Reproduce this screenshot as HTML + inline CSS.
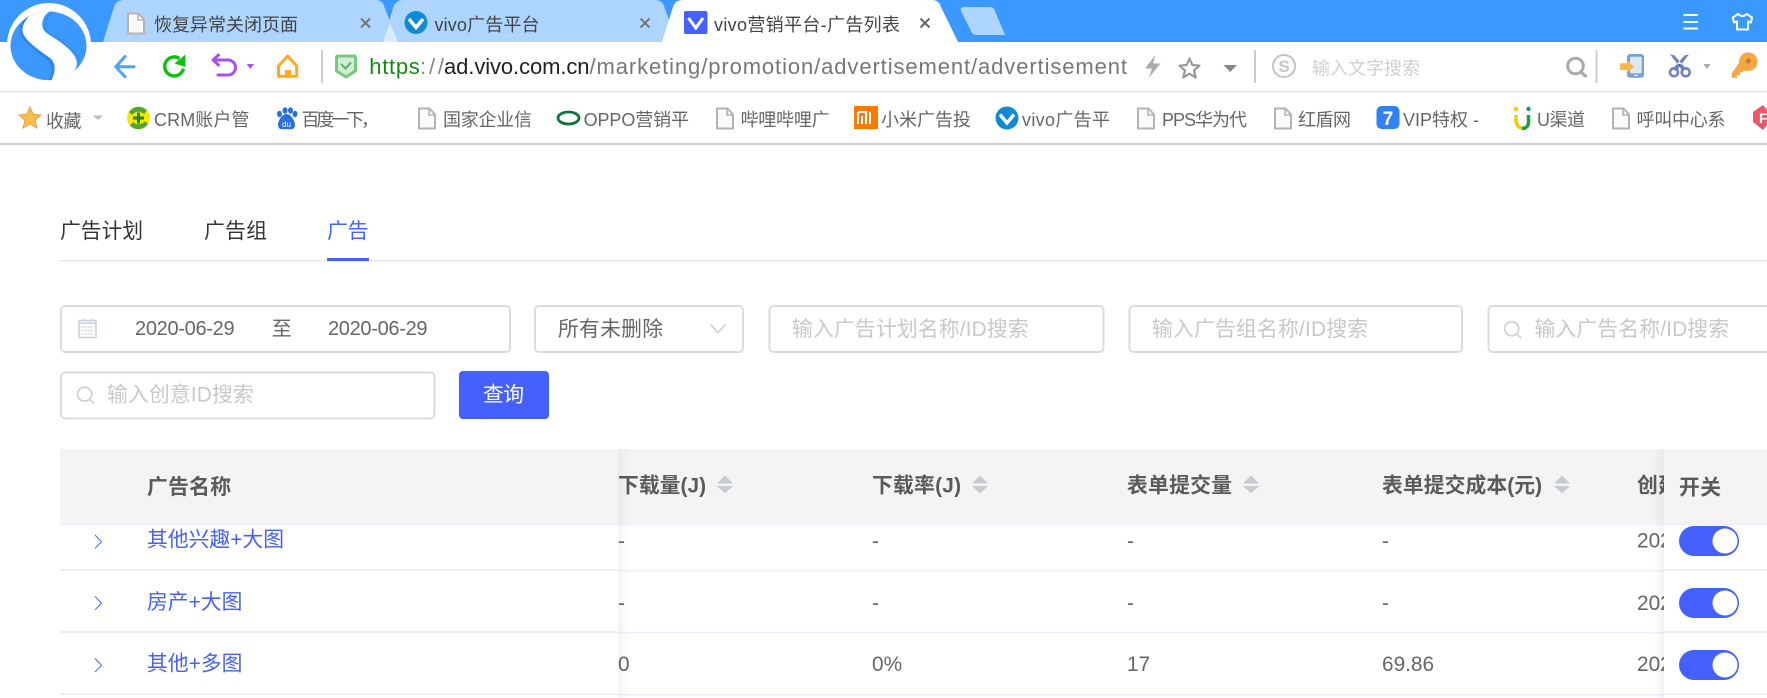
<!DOCTYPE html>
<html lang="zh-CN">
<head>
<meta charset="utf-8">
<title>vivo营销平台-广告列表</title>
<style>
html,body{margin:0;padding:0;width:1767px;height:698px;overflow:hidden;background:#fff}
svg{display:block}
text{font-family:"Liberation Sans","Noto Sans CJK SC",sans-serif}
.tb{font-size:18px;fill:#444}
.bm{font-size:18px;fill:#666}
.u{font-size:22px}
.c{font-size:20.8px;fill:#666}
.ph{font-size:20.8px;fill:#c8c8c8}
.h{font-size:20.8px;fill:#5a5a5a;font-weight:700}
.lk{font-size:20.8px;fill:#4460ff}
</style>
</head>
<body>
<svg width="1767" height="698" viewBox="0 0 1767 698" xmlns="http://www.w3.org/2000/svg">
<defs>
<linearGradient id="sl" x1="0" x2="1" y1="0" y2="0"><stop offset="0" stop-color="#000" stop-opacity=".045"/><stop offset="1" stop-color="#000" stop-opacity="0"/></linearGradient>
<linearGradient id="sr" x1="1" x2="0" y1="0" y2="0"><stop offset="0" stop-color="#000" stop-opacity=".045"/><stop offset="1" stop-color="#000" stop-opacity="0"/></linearGradient>
<g id="doc"><path d="M1 1H11.5L17 7V21H1Z" fill="#fafafa" stroke="#b4b4b4" stroke-width="2"/><path d="M11 1V7.5H17" fill="none" stroke="#b4b4b4" stroke-width="1.6"/></g>
<g id="viv"><circle cx="0" cy="0" r="11.5" fill="#0f8ad4"/><path d="M-7 -3.5L0 5L7 -3.5" fill="none" stroke="#fff" stroke-width="3.4"/></g>
<g id="sort"><path d="M8 0L16 8H0Z" fill="#c5cad3"/><path d="M0 10.5H16L8 18Z" fill="#c5cad3"/></g>
<g id="mag"><circle cx="7.7" cy="7.7" r="7" fill="none" stroke="#ccd0da" stroke-width="1.7"/><path d="M12.6 12.7L17.2 17.2" stroke="#ccd0da" stroke-width="1.7"/></g>
<clipPath id="lg"><ellipse cx="48.500" cy="45.800" rx="38" ry="34.300"/></clipPath>
</defs>

<!-- top bar -->
<rect width="1767" height="42" fill="#3a98ff"/>
<!-- tabs -->
<path d="M103 42L114 7Q116 0 124 0H376Q382 0 384 6L398 42Z" fill="#aed5ff"/>
<path d="M383 42L393 8Q396 0 403 0H655Q662 0 664 6L677 42Z" fill="#aed5ff"/>
<path d="M383 42L390 23L398 42Z" fill="#d9ebff"/>
<path d="M662 42L673 7Q675 0 683 0H932Q939 0 941 7L958 42Z" fill="#fff"/>
<path d="M964 7H990Q994 7 995 11L1005 35H977Q972 35 971 31L961 11Q960 7 964 7Z" fill="#aed5ff"/>
<!-- tab content -->
<use href="#doc" x="127" y="12.5"/>
<text class="tb" x="154" y="31" textLength="144">恢复异常关闭页面</text>
<path d="M361 18.500L370 27.500M370 18.500L361 27.500" stroke="#777" stroke-width="2"/>
<use href="#viv" x="416" y="22.500"/>
<text class="tb" x="434.500" y="31" textLength="105">vivo广告平台</text>
<path d="M640.500 18.500L649.500 27.500M649.500 18.500L640.500 27.500" stroke="#777" stroke-width="2"/>
<rect x="684" y="11" width="23.500" height="23" rx="2" fill="#4460ff"/>
<path d="M688.500 18L695.800 28L703 18" fill="none" stroke="#fff" stroke-width="3"/>
<text class="tb" x="714" y="31" textLength="186">vivo营销平台-广告列表</text>
<path d="M920.500 18.500L929.500 27.500M929.500 18.500L920.500 27.500" stroke="#666" stroke-width="2"/>
<!-- window controls -->
<path d="M1683.500 15H1698M1683.500 22H1698M1683.500 28.500H1698" stroke="#fff" stroke-width="2"/>
<path d="M1738 14L1732.800 17.500L1734 22.500L1737 21.500V29.500H1748V21.500L1751 22.500L1752 17.500L1746.800 14Q1742.400 18 1738 14Z" fill="none" stroke="#fff" stroke-width="2" stroke-linejoin="round"/>

<!-- toolbar -->
<rect y="42" width="1767" height="50" fill="#fff"/>
<rect y="91" width="1767" height="1.500" fill="#e6e6e6"/>
<!-- logo -->
<circle cx="49" cy="45" r="42" fill="#fff"/>
<ellipse cx="48.500" cy="45.800" rx="38" ry="34.300" fill="#3a98ff"/>
<g clip-path="url(#lg)">
<path d="M32 13C25 20 20 28 23 35C27 44 42 52 50 60C55 65 55 73 50 81" fill="none" stroke="#2f86e8" stroke-width="4"/>
<path d="M32 13C25 20 21 27 23 33C26 42 42 52 50 58C56 63 56 72 51 81L65 81C74 74 79 66 76 59C73 50 58 40 48 34C39 29 41 17 50 11Z" fill="#fff"/>
<path d="M50 11C41 17 39 29 48 34C58 40 73 50 76 59" fill="none" stroke="#2f86e8" stroke-width="1.500" transform="translate(3 1)" opacity=".7"/>
</g>
<!-- nav icons -->
<path d="M116 66.700H134M125 56.500L115.800 66.700L125 76.800" fill="none" stroke="#4da3ff" stroke-width="3" stroke-linecap="round" stroke-linejoin="round"/>
<path d="M183.500 68.500A9.500 9.500 0 1 1 179.500 58.500" fill="none" stroke="#10c010" stroke-width="3.400"/>
<path d="M185.500 54.500V67L174.500 63.500Z" fill="#10c010"/>
<path d="M214 60H228A7.500 7.500 0 0 1 228 75H218" fill="none" stroke="#a94ef0" stroke-width="3" stroke-linecap="round"/>
<path d="M218.500 55L213 60L218.500 65" fill="none" stroke="#a94ef0" stroke-width="3" stroke-linecap="round" stroke-linejoin="round"/>
<path d="M246.700 64H254L250.300 69Z" fill="#a94ef0"/>
<path d="M278.500 76.300V66L287.700 56L296.700 66V76.300Z" fill="none" stroke="#ffa820" stroke-width="3" stroke-linejoin="round"/>
<rect x="285" y="70" width="6" height="7" fill="#ffa820"/>
<rect x="321" y="50" width="2" height="33" fill="#ccc"/>
<path d="M336.500 57.500Q336.500 56 338 56H354Q355.500 56 355.500 57.500V71L346 77L336.500 71Z" fill="#cfeed2" stroke="#78c980" stroke-width="3" stroke-linejoin="round"/>
<path d="M341 64L345.500 68.500L351 62.500" fill="none" stroke="#6fae78" stroke-width="2.200"/>
<!-- url -->
<text class="u" x="369.300" y="74" textLength="50.500" fill="#148a14">https</text>
<text class="u" x="420" y="74" textLength="24" fill="#888">://</text>
<text class="u" x="444" y="74" textLength="145.500" fill="#222">ad.vivo.com.cn</text>
<text class="u" x="589.500" y="74" textLength="537.500" fill="#777">/marketing/promotion/advertisement/advertisement</text>
<path d="M1155.500 55L1145 68.500H1152L1149 77.500L1160.500 63.500H1153Z" fill="#aaa"/>
<path d="M1189.500 58.500L1192.300 65L1199.500 65.700L1194 70.400L1195.700 77.500L1189.500 73.700L1183.300 77.500L1185 70.400L1179.500 65.700L1186.700 65Z" fill="none" stroke="#999" stroke-width="2.200" stroke-linejoin="round"/>
<path d="M1223.500 65H1237L1230.200 72Z" fill="#888"/>
<rect x="1254" y="50" width="2" height="33" fill="#ccc"/>
<circle cx="1284" cy="66" r="11" fill="none" stroke="#c4c4c4" stroke-width="2"/>
<text x="1284" y="72" text-anchor="middle" font-size="17" font-weight="700" fill="#c4c4c4">S</text>
<text x="1312" y="74.500" font-size="18" fill="#d0d0d0" textLength="108">输入文字搜索</text>
<circle cx="1575.500" cy="66" r="7.800" fill="none" stroke="#aaa" stroke-width="3"/>
<path d="M1581 72L1586.500 77" stroke="#aaa" stroke-width="3.200"/>
<rect x="1595.500" y="50" width="2" height="33" fill="#ccc"/>
<!-- phone -->
<rect x="1627" y="54" width="17" height="23.700" rx="3" fill="#7b9fd0"/>
<rect x="1630" y="56.700" width="11.700" height="16.600" rx="1" fill="#dbe8f8"/>
<rect x="1634" y="74.700" width="4" height="1.300" fill="#dbe8f8"/>
<path d="M1620 63.300H1626.700V60L1634 66.700L1626.700 73V70H1620Z" fill="#f6ba47"/>
<!-- scissors -->
<path d="M1670 54.300L1674.500 55.500L1686 68.500L1683 71.500ZM1689 54.300L1684.500 55.500L1673 68.500L1676 71.500Z" fill="#6f80c4"/>
<circle cx="1674" cy="72.300" r="4" fill="none" stroke="#6f80c4" stroke-width="2.600"/>
<circle cx="1685.700" cy="72.300" r="4" fill="none" stroke="#6f80c4" stroke-width="2.600"/>
<circle cx="1679.500" cy="65" r="1.300" fill="#45538f"/>
<path d="M1703.300 64H1710.700L1707 69Z" fill="#aaa"/>
<!-- key -->
<circle cx="1748.300" cy="61.700" r="9.300" fill="#f4a742"/>
<circle cx="1748.300" cy="61" r="2.500" fill="#b9802f"/>
<path d="M1741 60L1731.700 73.500V77.800H1737V75H1740V72.500L1748 70Z" fill="#f4a742"/>

<!-- bookmarks -->
<rect y="143" width="1767" height="2" fill="#ccc"/>
<path d="M30 107L33.200 114.300L41 115L35 120.200L37 128L30 124L23 128L25 120.200L19 115L26.800 114.300Z" fill="#f5c04a" stroke="#ef9f3f" stroke-width="1"/>
<text class="bm" x="46" y="127.500" textLength="35.500">收藏</text>
<path d="M93 115.500H103L98 120Z" fill="#bbb"/>
<circle cx="138.500" cy="118" r="11.500" fill="#ffe600"/>
<path d="M129 112A11.500 11.500 0 0 1 147 110.500L144 114A8 8 0 0 0 132 115ZM148 124A11.500 11.500 0 0 1 130 125.500L133 122A8 8 0 0 0 145 121Z" fill="#4aa83a"/>
<path d="M138.500 112.500V123.500M133 118H144" stroke="#1a8a3a" stroke-width="3"/>
<text class="bm" x="154" y="126" textLength="95.500">CRM账户管</text>
<g fill="#2a6fe0"><ellipse cx="279.500" cy="114" rx="2.500" ry="3.200"/><ellipse cx="285" cy="110.500" rx="2.500" ry="3.200"/><ellipse cx="290.500" cy="110.500" rx="2.500" ry="3.200"/><ellipse cx="295" cy="114" rx="2.500" ry="3.200"/><path d="M286.500 114C282 114 278 121 278 125C278 130 283 129.500 286.500 129C290 129.500 295 130 295 125C295 121 291 114 286.500 114Z"/></g>
<text x="282" y="127" font-size="8" fill="#fff">du</text>
<text class="bm" x="301.500" y="126" textLength="77.500">百度一下，</text>
<use href="#doc" x="418" y="107.500"/>
<text class="bm" x="443" y="126" textLength="89">国家企业信</text>
<ellipse cx="568.500" cy="118" rx="10.500" ry="6" fill="none" stroke="#10743a" stroke-width="2.800"/>
<text class="bm" x="583.600" y="126" textLength="105.400">OPPO营销平</text>
<use href="#doc" x="716" y="107.500"/>
<text class="bm" x="740.500" y="126" textLength="89.100">哔哩哔哩广</text>
<rect x="854" y="106" width="24" height="23" fill="#ff7a00"/>
<path d="M858 112H866V124M858 112V124M862 116V124M870 112V124" fill="none" stroke="#fff" stroke-width="2"/>
<text class="bm" x="881" y="126" textLength="90">小米广告投</text>
<use href="#viv" x="1007" y="118"/>
<text class="bm" x="1022" y="126" textLength="88">vivo广告平</text>
<use href="#doc" x="1137" y="107.500"/>
<text class="bm" x="1162" y="126" textLength="85">PPS华为代</text>
<use href="#doc" x="1274" y="107.500"/>
<text class="bm" x="1298" y="126" textLength="53">红盾网</text>
<rect x="1376.500" y="106" width="23" height="23" rx="5" fill="#3180f5"/>
<text x="1388" y="125" text-anchor="middle" font-size="19" font-weight="700" fill="#fff">7</text>
<text class="bm" x="1403" y="126" textLength="76">VIP特权 -</text>
<path d="M1516 115V120C1516 126 1520 128.500 1524 128.500" fill="none" stroke="#f5c800" stroke-width="3.500"/>
<path d="M1528.500 115V122C1528.500 126 1526 128.500 1522 128.500" fill="none" stroke="#1f9d4d" stroke-width="3.500"/>
<circle cx="1516" cy="109" r="2.200" fill="#f5c800"/><circle cx="1528.500" cy="109" r="2.200" fill="#1f9d4d"/>
<text class="bm" x="1537" y="126" textLength="48">U渠道</text>
<use href="#doc" x="1612" y="107.500"/>
<text class="bm" x="1636.500" y="126" textLength="89">呼叫中心系</text>
<path d="M1763 105L1773 117L1763 130L1753 122V112Z" fill="#f0566a"/>
<text x="1759" y="123" font-size="14" font-weight="700" fill="#fff">F</text>

<!-- page tabs -->
<text x="60" y="238" font-size="20.800" fill="#333" textLength="83">广告计划</text>
<text x="204" y="238" font-size="20.800" fill="#333" textLength="63">广告组</text>
<text x="327" y="238" font-size="20.800" fill="#4460ff" textLength="41.500">广告</text>
<rect x="60" y="260" width="1707" height="1.500" fill="#e8e8ec"/>
<rect x="327" y="258" width="42" height="3" fill="#4460ff"/>

<!-- filters -->
<rect x="61" y="306" width="449" height="46" rx="4" fill="#fff" stroke="#dcdcdc" stroke-width="2"/>
<path d="M79 323H96M79 323V337.500H96V323M79 323V320.500H96V323M83.500 318.500V321M91.500 318.500V321" fill="none" stroke="#ccd0da" stroke-width="1.600"/>
<path d="M81.500 327H93.500M81.500 330.500H93.500M81.500 334H93.500" stroke="#ccd0da" stroke-width="1.300" stroke-dasharray="2 1"/>
<text x="135" y="335" font-size="20" fill="#666" textLength="99.600">2020-06-29</text>
<text x="271.700" y="335.500" font-size="20" fill="#666" textLength="20">至</text>
<text x="328" y="335" font-size="20" fill="#666" textLength="99.500">2020-06-29</text>
<rect x="535" y="306" width="208" height="46" rx="4" fill="#fff" stroke="#dcdcdc" stroke-width="2"/>
<text x="558" y="336" font-size="20.800" fill="#666" textLength="105">所有未删除</text>
<path d="M710.500 324.500L718 332.500L725.500 324.500" fill="none" stroke="#c8cdd8" stroke-width="1.500"/>
<rect x="769.500" y="306" width="334" height="46" rx="4" fill="#fff" stroke="#dcdcdc" stroke-width="2"/>
<text class="ph" x="792" y="336" textLength="236.600">输入广告计划名称/ID搜索</text>
<rect x="1129.500" y="306" width="332.500" height="46" rx="4" fill="#fff" stroke="#dcdcdc" stroke-width="2"/>
<text class="ph" x="1152" y="336" textLength="216">输入广告组名称/ID搜索</text>
<rect x="1488.500" y="306" width="320" height="46" rx="4" fill="#fff" stroke="#dcdcdc" stroke-width="2"/>
<use href="#mag" x="1504" y="321"/>
<text class="ph" x="1534.500" y="336" textLength="194.500">输入广告名称/ID搜索</text>

<rect x="61" y="372.500" width="373.500" height="46" rx="4" fill="#fff" stroke="#dcdcdc" stroke-width="2"/>
<use href="#mag" x="77" y="386.500"/>
<text class="ph" x="107" y="401.500" textLength="146.700">输入创意ID搜索</text>
<rect x="459" y="371" width="90" height="48" rx="4" fill="#4460ff"/>
<text x="483" y="401.500" font-size="20.800" fill="#fff" textLength="41">查询</text>

<!-- table: header -->
<rect x="60" y="449" width="1707" height="75.300" fill="#f4f4f5"/>
<rect x="60" y="524" width="1707" height="1.300" fill="#edf0f7"/>
<!-- scrolling area -->
<text class="h" x="618" y="492.500" textLength="88">下载量(J)</text>
<use href="#sort" x="717" y="475.500"/>
<text class="h" x="872" y="492.500" textLength="89">下载率(J)</text>
<use href="#sort" x="972" y="475.500"/>
<text class="h" x="1127" y="492.500" textLength="105">表单提交量</text>
<use href="#sort" x="1243" y="475.500"/>
<text class="h" x="1382" y="492.500" textLength="160">表单提交成本(元)</text>
<use href="#sort" x="1554" y="475.500"/>
<text class="h" x="1637" y="492.500" textLength="42">创建</text>

<rect x="618" y="570" width="1149" height="1.300" fill="#edf0f7"/>
<rect x="618" y="632" width="1149" height="1.300" fill="#edf0f7"/>
<rect x="618" y="694" width="1149" height="1.300" fill="#edf0f7"/>

<text class="c" x="618" y="548">-</text><text class="c" x="872" y="548">-</text><text class="c" x="1127" y="548">-</text><text class="c" x="1382" y="548">-</text>
<text class="c" x="1637" y="547.500">2020</text>
<text class="c" x="618" y="610">-</text><text class="c" x="872" y="610">-</text><text class="c" x="1127" y="610">-</text><text class="c" x="1382" y="610">-</text>
<text class="c" x="1637" y="610">2020</text>
<text class="c" x="618" y="671">0</text><text class="c" x="872" y="671">0%</text><text class="c" x="1127" y="671">17</text><text class="c" x="1382" y="671">69.86</text>
<text class="c" x="1637" y="671">2020</text>

<!-- left fixed column -->
<rect x="618" y="449" width="12" height="249" fill="url(#sl)"/>
<rect x="60" y="449" width="558" height="75.300" fill="#f4f4f5"/>
<rect x="60" y="524" width="558" height="1.300" fill="#edf0f7"/>
<rect x="60" y="525.300" width="558" height="172.700" fill="#fff"/>
<rect x="60" y="569" width="558" height="2" fill="#edf0f7"/>
<rect x="60" y="631" width="558" height="2" fill="#edf0f7"/>
<rect x="60" y="693" width="558" height="2" fill="#edf0f7"/>
<text class="h" x="147" y="494" textLength="84">广告名称</text>
<path d="M95 535L101.500 541.700L95 548.300" fill="none" stroke="#4460ff" stroke-width="1"/>
<path d="M95 596.500L101.500 603.200L95 609.800" fill="none" stroke="#4460ff" stroke-width="1"/>
<path d="M95 658.500L101.500 665.200L95 671.800" fill="none" stroke="#4460ff" stroke-width="1"/>
<text class="lk" x="147" y="546.500" textLength="137">其他兴趣+大图</text>
<text class="lk" x="147" y="609" textLength="95.400">房产+大图</text>
<text class="lk" x="147" y="670.500" textLength="95.400">其他+多图</text>

<!-- right fixed column -->
<rect x="1652" y="449" width="12" height="249" fill="url(#sr)"/>
<rect x="1664" y="449" width="103" height="75.300" fill="#f4f4f5"/>
<rect x="1664" y="524" width="103" height="1.300" fill="#edf0f7"/>
<rect x="1664" y="525.300" width="103" height="172.700" fill="#fff"/>
<rect x="1664" y="569" width="103" height="2" fill="#edf0f7"/>
<rect x="1664" y="631" width="103" height="2" fill="#edf0f7"/>
<rect x="1664" y="693" width="103" height="2" fill="#edf0f7"/>
<text class="h" x="1679" y="494.500" textLength="42">开关</text>
<rect x="1679" y="526" width="60" height="30" rx="15" fill="#4460ff"/><circle cx="1725" cy="541" r="12.500" fill="#fff"/>
<rect x="1679" y="588" width="60" height="30" rx="15" fill="#4460ff"/><circle cx="1725" cy="603" r="12.500" fill="#fff"/>
<rect x="1679" y="650" width="60" height="30" rx="15" fill="#4460ff"/><circle cx="1725" cy="665" r="12.500" fill="#fff"/>
</svg>
</body>
</html>
